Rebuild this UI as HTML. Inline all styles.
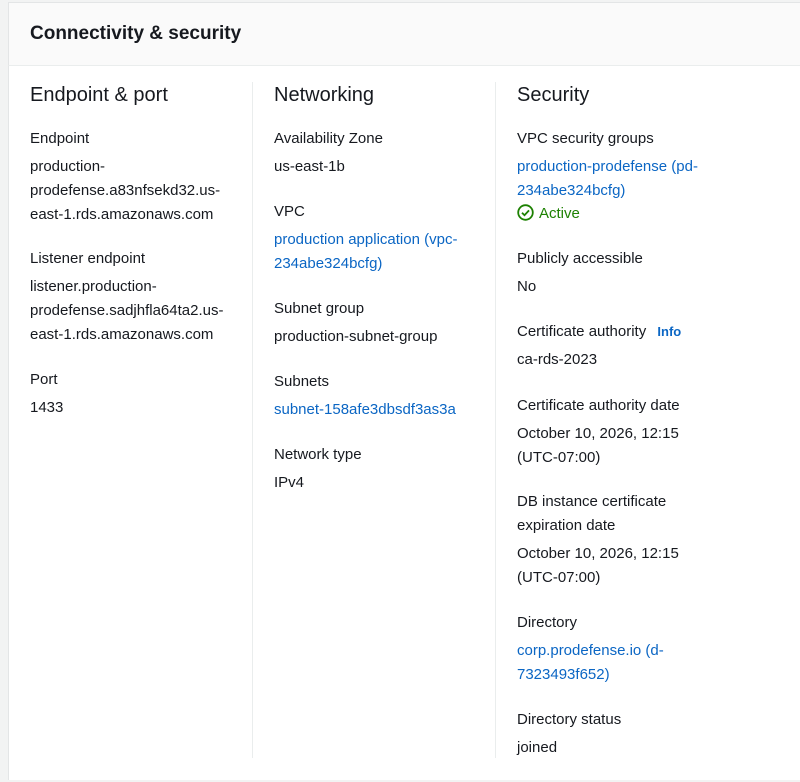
<!DOCTYPE html>
<html><head><meta charset="utf-8"><style>
*{margin:0;padding:0;box-sizing:border-box}
body{width:800px;height:780px;background:#f2f3f3;font-family:"Liberation Sans",sans-serif;color:#16191f;position:relative;overflow:hidden}
.card{position:absolute;left:8px;top:2px;width:800px;height:778px;background:#fff;border-left:1px solid #e3e5e6;border-top:1px solid #e3e5e6}
.hdr{position:absolute;left:8px;top:2px;width:800px;height:64px;background:#fafafa;border-bottom:1px solid #eaeded;border-left:1px solid #e3e5e6;border-top:1px solid #e3e5e6}
.t{position:absolute;left:30px;top:21px;font-size:19px;font-weight:bold;line-height:26px}
.w{position:absolute;left:0;top:2px;width:800px;height:780px}
.l{position:absolute;font-size:15px;line-height:24px;white-space:nowrap}
.h{font-size:20px;line-height:28px}
.a{color:#0b66c4}
.g{color:#1d8102}
.div{position:absolute;top:82px;height:676px;width:1px;background:#eaeded}
</style></head><body>
<div class="card"></div>
<div class="hdr"></div>
<div class="t">Connectivity &amp; security</div>
<div class="div" style="left:252px"></div>
<div class="div" style="left:495px"></div>
<div class="w">
<div class="l h" style="left:30px;top:79px">Endpoint &amp; port</div>
<div class="l" style="left:30px;top:125px">Endpoint</div>
<div class="l" style="left:30px;top:153px">production-</div>
<div class="l" style="left:30px;top:177px">prodefense.a83nfsekd32.us-</div>
<div class="l" style="left:30px;top:201px">east-1.rds.amazonaws.com</div>
<div class="l" style="left:30px;top:245px">Listener endpoint</div>
<div class="l" style="left:30px;top:273px">listener.production-</div>
<div class="l" style="left:30px;top:297px">prodefense.sadjhfla64ta2.us-</div>
<div class="l" style="left:30px;top:321px">east-1.rds.amazonaws.com</div>
<div class="l" style="left:30px;top:366px">Port</div>
<div class="l" style="left:30px;top:394px">1433</div>

<div class="l h" style="left:274px;top:79px">Networking</div>
<div class="l" style="left:274px;top:125px">Availability Zone</div>
<div class="l" style="left:274px;top:153px">us-east-1b</div>
<div class="l" style="left:274px;top:198px">VPC</div>
<div class="l a" style="left:274px;top:226px">production application (vpc-</div>
<div class="l a" style="left:274px;top:250px">234abe324bcfg)</div>
<div class="l" style="left:274px;top:295px">Subnet group</div>
<div class="l" style="left:274px;top:323px">production-subnet-group</div>
<div class="l" style="left:274px;top:368px">Subnets</div>
<div class="l a" style="left:274px;top:396px">subnet-158afe3dbsdf3as3a</div>
<div class="l" style="left:274px;top:441px">Network type</div>
<div class="l" style="left:274px;top:469px">IPv4</div>

<div class="l h" style="left:517px;top:79px">Security</div>
<div class="l" style="left:517px;top:125px">VPC security groups</div>
<div class="l a" style="left:517px;top:153px">production-prodefense (pd-</div>
<div class="l a" style="left:517px;top:177px">234abe324bcfg)</div>
<div class="l g" style="left:517px;top:200px"><svg width="17" height="17" viewBox="0 0 17 17" style="vertical-align:-3px;margin-right:5px"><circle cx="8.5" cy="8.5" r="7.3" fill="none" stroke="#1d8102" stroke-width="1.8"/><path d="M5 8.7l2.5 2.5 4.5-4.8" fill="none" stroke="#1d8102" stroke-width="1.8"/></svg>Active</div>
<div class="l" style="left:517px;top:245px">Publicly accessible</div>
<div class="l" style="left:517px;top:273px">No</div>
<div class="l" style="left:517px;top:318px">Certificate authority <span class="a" style="font-size:13px;font-weight:bold;margin-left:7px">Info</span></div>
<div class="l" style="left:517px;top:346px">ca-rds-2023</div>
<div class="l" style="left:517px;top:392px">Certificate authority date</div>
<div class="l" style="left:517px;top:420px">October 10, 2026, 12:15</div>
<div class="l" style="left:517px;top:444px">(UTC-07:00)</div>
<div class="l" style="left:517px;top:488px">DB instance certificate</div>
<div class="l" style="left:517px;top:512px">expiration date</div>
<div class="l" style="left:517px;top:540px">October 10, 2026, 12:15</div>
<div class="l" style="left:517px;top:564px">(UTC-07:00)</div>
<div class="l" style="left:517px;top:609px">Directory</div>
<div class="l a" style="left:517px;top:637px">corp.prodefense.io (d-</div>
<div class="l a" style="left:517px;top:661px">7323493f652)</div>
<div class="l" style="left:517px;top:706px">Directory status</div>
<div class="l" style="left:517px;top:734px">joined</div>
</div>
</body></html>
